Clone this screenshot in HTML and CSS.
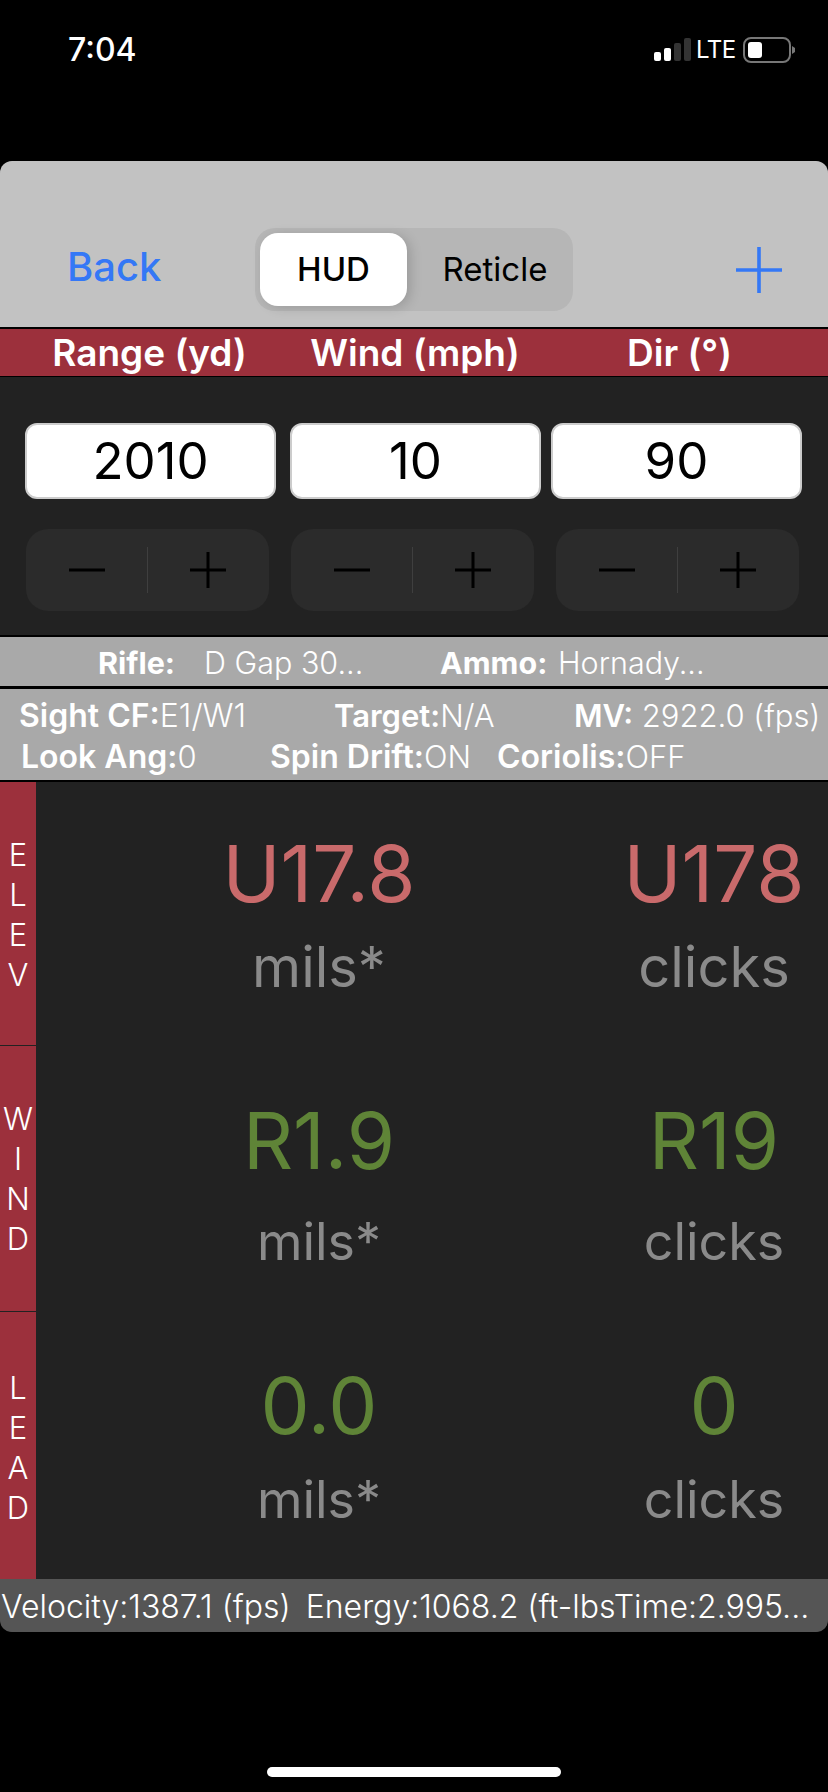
FILE: index.html
```html
<!DOCTYPE html>
<html lang="en">
<head>
  <meta charset="UTF-8">
  <title>HUD</title>
  <meta name="viewport" content="width=device-width, initial-scale=1.0">
  <link rel="stylesheet" href="styles.css">
</head>
<body>
  <div class="status">
    <div class="clock">7:04</div>
    <div class="status-right">
      <div class="signal">
        <span class="bar b1"></span>
        <span class="bar b2"></span>
        <span class="bar b3"></span>
        <span class="bar b4"></span>
      </div>
      <div class="lte">LTE</div>
      <svg class="battery" width="53" height="26" viewBox="0 0 53 26">
        <rect x="1" y="1" width="46" height="24" rx="7" fill="none" stroke="#777" stroke-width="2"/>
        <rect x="5" y="5" width="14" height="16" rx="3" fill="#fff"/>
        <path d="M49 9 L52 11 V15 L49 17 Z" fill="#777"/>
      </svg>
    </div>
  </div>

  <div class="panel">
    <div class="toolbar">
      <div class="back">Back</div>
      <div class="segment">
        <div class="seg seg-on">HUD</div>
        <div class="seg seg-off">Reticle</div>
      </div>
      <svg class="add" width="46" height="46" viewBox="0 0 46 46">
        <path d="M23 0 V46 M0 23 H46" stroke="#3478f6" stroke-width="3.6" fill="none"/>
      </svg>
    </div>

    <div class="heads">
      <div class="head">Range (yd)</div>
      <div class="head">Wind (mph)</div>
      <div class="head">Dir (°)</div>
    </div>

    <div class="inputs">
      <div class="fields">
        <div class="field">2010</div>
        <div class="field">10</div>
        <div class="field">90</div>
      </div>
      <div class="steppers">
        <div class="stepper">
          <svg class="sign" width="36" height="36" viewBox="0 0 36 36"><path d="M0 18 H36" stroke="#000" stroke-width="3"/></svg>
          <span class="sep"></span>
          <svg class="sign" width="36" height="36" viewBox="0 0 36 36"><path d="M0 18 H36 M18 0 V36" stroke="#000" stroke-width="3"/></svg>
        </div>
        <div class="stepper">
          <svg class="sign" width="36" height="36" viewBox="0 0 36 36"><path d="M0 18 H36" stroke="#000" stroke-width="3"/></svg>
          <span class="sep"></span>
          <svg class="sign" width="36" height="36" viewBox="0 0 36 36"><path d="M0 18 H36 M18 0 V36" stroke="#000" stroke-width="3"/></svg>
        </div>
        <div class="stepper">
          <svg class="sign" width="36" height="36" viewBox="0 0 36 36"><path d="M0 18 H36" stroke="#000" stroke-width="3"/></svg>
          <span class="sep"></span>
          <svg class="sign" width="36" height="36" viewBox="0 0 36 36"><path d="M0 18 H36 M18 0 V36" stroke="#000" stroke-width="3"/></svg>
        </div>
      </div>
    </div>

    <div class="rifle-bar">
      <b class="rifle-k">Rifle:</b><span class="rifle-v">D Gap 30...</span>
      <b class="ammo-k">Ammo:</b><span class="ammo-v">Hornady...</span>
    </div>

    <div class="info">
      <div class="info-row">
        <div class="i-sight"><b>Sight CF:</b>E1/W1</div>
        <div class="i-target"><b>Target:</b>N/A</div>
        <div class="i-mv"><b>MV:</b> 2922.0 (fps)</div>
      </div>
      <div class="info-row">
        <div class="i-look"><b>Look Ang:</b>0</div>
        <div class="i-spin"><b>Spin Drift:</b>ON</div>
        <div class="i-cor"><b>Coriolis:</b>OFF</div>
      </div>
    </div>

    <div class="result elev">
      <div class="side"><span>E</span><span>L</span><span>E</span><span>V</span></div>
      <div class="cell"><div class="val red">U17.8</div><div class="unit">mils*</div></div>
      <div class="cell"><div class="val red">U178</div><div class="unit">clicks</div></div>
    </div>
    <div class="result wind">
      <div class="side"><span>W</span><span>I</span><span>N</span><span>D</span></div>
      <div class="cell"><div class="val green">R1.9</div><div class="unit">mils*</div></div>
      <div class="cell"><div class="val green">R19</div><div class="unit">clicks</div></div>
    </div>
    <div class="result lead">
      <div class="side"><span>L</span><span>E</span><span>A</span><span>D</span></div>
      <div class="cell"><div class="val green">0.0</div><div class="unit">mils*</div></div>
      <div class="cell"><div class="val green">0</div><div class="unit">clicks</div></div>
    </div>

    <div class="footer">Velocity:1387.1 (fps)<span class="f-energy">Energy:1068.2 (ft-lbs</span><span>Time:2.995...</span></div>
  </div>

  <div class="home"></div>
</body>
</html>
```

FILE: styles.css
```css
* {
  box-sizing: border-box;
}

body {
  margin: 0;
  width: 828px;
  height: 1792px;
  overflow: hidden;
  background: #000;
  font-family: Inter, "Liberation Sans", sans-serif;
  color: #fff;
}

/* status bar */
.status {
  height: 161px;
  display: flex;
  justify-content: space-between;
  align-items: flex-start;
  padding: 31px 32px 0 68px;
}

.clock {
  font-size: 32px;
  font-weight: 500;
  line-height: 38px;
}

.status-right {
  display: flex;
  align-items: flex-start;
  padding-top: 6px;
}

.signal {
  display: flex;
  align-items: flex-end;
  gap: 3px;
  height: 24px;
  margin-right: 5px;
}

.bar {
  width: 7px;
  border-radius: 2px;
  background: #fff;
}

.b1 { height: 9px; }
.b2 { height: 13px; }
.b3 { height: 18px; background: #333; }
.b4 { height: 23px; background: #333; }

.lte {
  font-size: 24px;
  line-height: 26px;
  letter-spacing: -0.5px;
  width: 47px;
}

.battery {
  display: block;
}

.panel {
  width: 828px;
  border-radius: 12px;
  overflow: hidden;
  background: #222;
}

/* top toolbar */
.toolbar {
  height: 168px;
  background: #c2c2c2;
  border-bottom: 2px solid #000;
  position: relative;
  display: flex;
  padding-top: 67px;
}

.back {
  width: 255px;
  padding-left: 67px;
  padding-top: 16px;
  font-size: 40px;
  font-weight: 500;
  line-height: 46px;
  color: #3478f6;
}

.segment {
  width: 318px;
  height: 83px;
  background: #b6b6b6;
  border-radius: 20px;
  padding: 5px;
  display: flex;
}

.seg {
  color: #000;
  font-size: 33px;
  line-height: 73px;
  text-align: center;
  flex: 1;
}

.seg-off {
  padding-left: 15px;
}

.seg-on {
  flex: none;
  width: 147px;
  background: #fff;
  border-radius: 18px;
  font-weight: 500;
  box-shadow: 4px 2px 12px rgba(0,0,0,0.15);
}

.add {
  margin-left: 163px;
  margin-top: 19px;
}

/* red column heads */
.heads {
  height: 48px;
  background: #9c303c;
  border-bottom: 1px solid #000;
  display: grid;
  grid-template-columns: 299px 232px 297px;
}

.head {
  text-align: center;
  font-size: 37px;
  font-weight: 600;
  line-height: 47px;
  white-space: nowrap;
}

/* number fields and steppers */
.inputs {
  height: 260px;
  padding: 46px 26px 0 25px;
  background: #222;
  border-bottom: 2px solid #000;
}

.fields {
  display: flex;
  gap: 14px;
}

.field {
  width: 251px;
  height: 76px;
  background: #fff;
  border: 2px solid #ccc;
  border-radius: 12px;
  color: #000;
  font-size: 51px;
  line-height: 72px;
  text-align: center;
}

.field:nth-child(3) {
  margin-left: -4px;
}

.steppers {
  display: flex;
  gap: 22px;
  margin-top: 30px;
  margin-left: 1px;
}

.stepper {
  width: 243px;
  height: 82px;
  background: #2b2b2b;
  border-radius: 22px;
  display: flex;
  align-items: center;
  padding-left: 43px;
}

.sep {
  width: 1px;
  height: 46px;
  background: #3f3f3f;
  margin: 0 42px;
}

.sign {
  display: block;
}

/* rifle and ammo strip */
.rifle-bar {
  height: 52px;
  background: #a9a9a9;
  border-bottom: 3px solid #000;
  font-size: 30.5px;
  line-height: 52px;
  display: flex;
  white-space: nowrap;
}

.info {
  height: 93px;
  background: #a9a9a9;
  border-bottom: 2px solid #000;
  font-size: 31px;
  padding-top: 6px;
  white-space: nowrap;
}

.rifle-k { margin-left: 98px; width: 106px; }
.rifle-v { width: 236px; font-weight: 300; }
.ammo-k { width: 118px; }
.ammo-v { font-weight: 300; }

.info-row {
  display: flex;
  height: 41px;
  line-height: 41px;
  font-weight: 300;
}

.info b { font-weight: 600; font-size: 32px; }
.info .i-target b, .info .i-mv b { font-size: 31px; }

.i-sight { margin-left: 19px; width: 315px; font-size: 32px; }
.i-target { width: 240px; }
.i-look { margin-left: 21px; width: 249px; }
.i-spin { width: 227px; }

/* result rows */
.result {
  display: grid;
  grid-template-columns: 36px 566px 224px;
  height: 266px;
  background: #222;
}

.elev { height: 264px; }
.lead { height: 267px; }

.side {
  background: #9c303c;
  border-bottom: 1px solid #222;
  display: flex;
  flex-direction: column;
  align-items: center;
  padding-top: 53px;
  font-size: 31px;
  font-weight: 300;
  line-height: 40px;
}

.lead .side {
  padding-top: 56px;
  border-bottom: 0;
}

.cell {
  text-align: center;
  padding-top: 50px;
}

.val {
  font-size: 78px;
  font-weight: 400;
  line-height: 84px;
}

.unit {
  font-size: 56px;
  line-height: 84px;
  margin-top: 9px;
  color: #8a8a8a;
}

.wind .cell { padding-top: 53px; }
.wind .unit { font-size: 52px; margin-top: 17px; }
.lead .cell { padding-top: 52px; }
.lead .unit { font-size: 52px; margin-top: 10px; }

.red { color: #c96a6b; }
.green { color: #5f8437; }

.footer {
  height: 53px;
  background: #555;
  border-radius: 0 0 10px 10px;
  font-size: 32px;
  font-weight: 300;
  line-height: 50px;
  padding: 3px 0 0 1px;
  white-space: nowrap;
  display: flex;
}

/* the time label butts straight up against this one */
.f-energy {
  margin-left: 15px;
  flex: none;
  width: 308px;
}

.home {
  width: 294px;
  height: 10px;
  background: #fff;
  border-radius: 5px;
  margin: 135px 0 0 267px;
}
```
